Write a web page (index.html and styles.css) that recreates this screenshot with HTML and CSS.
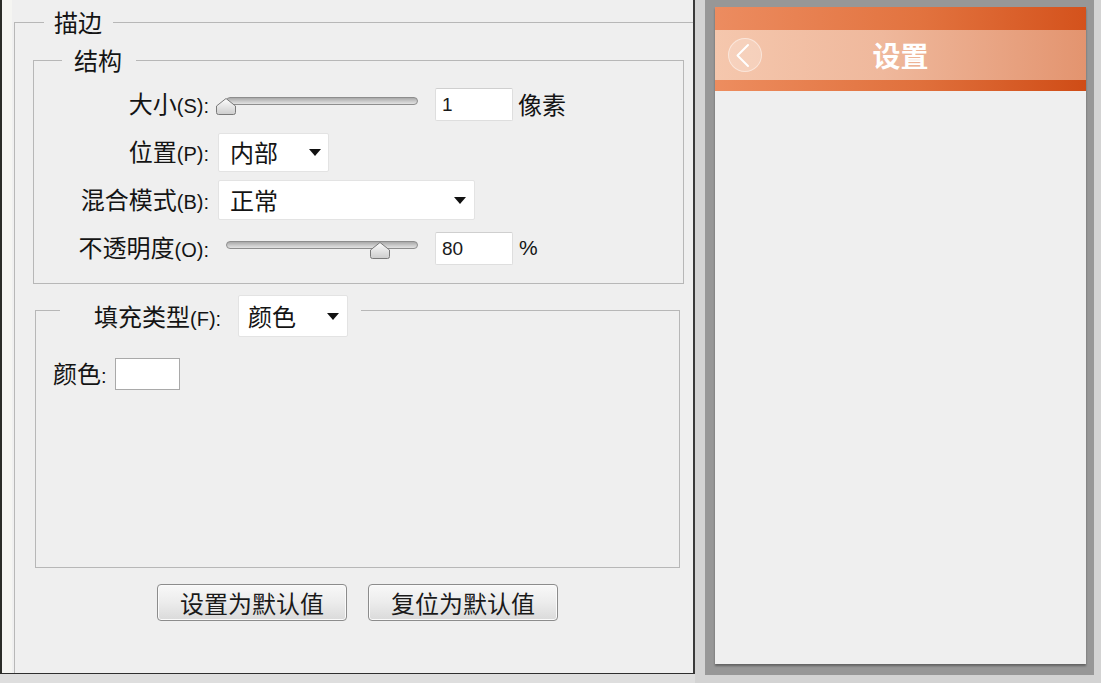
FILE: index.html
```html
<!DOCTYPE html>
<html lang="zh-CN">
<head>
<meta charset="utf-8">
<title>描边</title>
<link rel="stylesheet" href="styles.css">
</head>
<body>
<div class="page">
  <section class="dialog">
    <fieldset class="grp grp-stroke">
      <legend class="lg lg-stroke">描边</legend>

      <fieldset class="grp grp-struct">
        <legend class="lg lg-struct">结构</legend>
        <div class="form">
          <label class="lbl">大小<span class="k">(S):</span></label>
          <div class="ctl">
            <div class="slider" style="--v:0">
              <div class="track"></div>
              <svg class="thumb" viewBox="0 0 22 19" width="22" height="19"><defs><linearGradient id="tg1" x1="0" y1="0" x2="0" y2="1"><stop offset="0" stop-color="#fdfdfd"/><stop offset="1" stop-color="#cdcdcd"/></linearGradient></defs><path d="M11 1.5 L20.5 9 V15.5 Q20.5 17.5 18.5 17.5 H3.5 Q1.5 17.5 1.5 15.5 V9 Z" fill="url(#tg1)" stroke="#7a7a7a"/></svg>
            </div>
            <div class="num">1</div>
            <span class="unit">像素</span>
          </div>

          <label class="lbl">位置<span class="k">(P):</span></label>
          <div class="ctl">
            <div class="sel sel-pos"><span>内部</span><i class="caret"></i></div>
          </div>

          <label class="lbl">混合模式<span class="k">(B):</span></label>
          <div class="ctl">
            <div class="sel sel-blend"><span>正常</span><i class="caret"></i></div>
          </div>

          <label class="lbl">不透明度<span class="k">(O):</span></label>
          <div class="ctl">
            <div class="slider" style="--v:0.8">
              <div class="track"></div>
              <svg class="thumb" viewBox="0 0 22 19" width="22" height="19"><defs><linearGradient id="tg2" x1="0" y1="0" x2="0" y2="1"><stop offset="0" stop-color="#fdfdfd"/><stop offset="1" stop-color="#cdcdcd"/></linearGradient></defs><path d="M11 1.5 L20.5 9 V15.5 Q20.5 17.5 18.5 17.5 H3.5 Q1.5 17.5 1.5 15.5 V9 Z" fill="url(#tg2)" stroke="#7a7a7a"/></svg>
            </div>
            <div class="num">80</div>
            <span class="unit pct">%</span>
          </div>
        </div>
      </fieldset>

      <fieldset class="grp grp-fill">
        <legend class="lg lg-fill">
          <span class="lbl">填充类型<span class="k">(F):</span></span>
          <span class="sel sel-fill"><span>颜色</span><i class="caret"></i></span>
        </legend>
        <div class="color-row">
          <span class="lbl">颜色<span class="k">:</span></span>
          <div class="swatch"></div>
        </div>
      </fieldset>

      <div class="btns">
        <button class="btn" type="button">设置为默认值</button>
        <button class="btn" type="button">复位为默认值</button>
      </div>
    </fieldset>
  </section>

  <section class="preview">
    <div class="frame">
      <div class="screen">
        <header class="appbar">
          <div class="bar-top"></div>
          <div class="bar-mid">
            <span class="back">
              <svg viewBox="0 0 34 34" width="34" height="34"><polyline points="20,7 9.5,17.5 20,28" fill="none" stroke="#fff" stroke-width="2" stroke-linecap="round" stroke-linejoin="round"/></svg>
            </span>
            <h1 class="title">设置</h1>
          </div>
          <div class="bar-bot"></div>
        </header>
        <div class="content"></div>
      </div>
    </div>
  </section>
</div>
</body>
</html>
```

FILE: styles.css
```css
* { box-sizing: border-box; }

html, body {
  margin: 0;
  padding: 0;
}

body {
  width: 1101px;
  height: 683px;
  overflow: hidden;
  background: #dedede;
  font-family: "Noto Sans CJK SC", sans-serif;
  color: #141414;
}

.page {
  display: flex;
  height: 683px;
}

/* ---------- dialog ---------- */
.dialog {
  width: 695px;
  height: 674px;
  flex: none;
  background: #efefef;
  border-left: 2px solid #2c2d28;
  border-right: 2px solid #3a3a3a;
  border-bottom: 1px solid #2e2e2e;
  box-shadow: inset 10px 0 0 #f5f5f2;
  overflow: hidden;
}

.grp {
  margin: 0;
  padding: 0;
  min-width: 0;
  border: 1px solid #b7b7b7;
}

.lg {
  margin: 0;
  padding: 0;
  font-size: 24px;
  line-height: 28px;
  white-space: nowrap;
}

.k {
  font-family: "Liberation Sans", sans-serif;
  font-size: 20px;
}

.grp-stroke {
  margin: 8px 0 0 12px;
  border-right: 0;
  border-bottom: 0;
  height: 700px;
}

.lg-stroke {
  margin-left: 29px;
  padding: 0 11px 0 10px;
}

.grp-struct {
  margin: 10px 9px 0 18px;
  padding: 10px 0 15px 0;
}

.lg-struct {
  margin-left: 28px;
  padding: 0 14px 0 12px;
}

.form {
  display: grid;
  grid-template-columns: 175px auto;
  grid-auto-rows: 40px;
  column-gap: 9px;
  row-gap: 8px;
  align-items: center;
}

.lbl {
  font-size: 24px;
  line-height: 28px;
  white-space: nowrap;
}

.form .lbl {
  text-align: right;
}

.ctl {
  display: flex;
  align-items: center;
}

.slider {
  position: relative;
  width: 200px;
  height: 19px;
}

.track {
  margin: 2px 0 0 8px;
  width: 192px;
  height: 8px;
  border: 1px solid #8d8d8d;
  border-radius: 4px;
  background: linear-gradient(#a9a9a9, #cacaca 55%, #e2e2e2);
}

.thumb {
  position: absolute;
  top: 2px;
  left: calc(8px + var(--v) * 192px - 11px);
  display: block;
}

.num {
  margin-left: 17px;
  width: 78px;
  height: 33px;
  background: #fff;
  border: 1px solid #dedede;
  border-top-color: #cfcfcf;
  border-radius: 2px;
  padding-left: 6px;
  font-family: "Liberation Sans", sans-serif;
  font-size: 19px;
  line-height: 31px;
  color: #1a1a1a;
}

.unit {
  margin-left: 5px;
  font-size: 24px;
  line-height: 28px;
}

.unit.pct {
  font-family: "Liberation Sans", sans-serif;
  font-size: 21px;
  margin-left: 6px;
}

.sel {
  display: flex;
  align-items: center;
  justify-content: space-between;
  background: #fff;
  border: 1px solid #e3e3e3;
  border-radius: 2px;
  padding: 0 7px 0 11px;
  font-size: 24px;
  line-height: 28px;
}

.sel-pos { width: 111px; height: 39px; }
.sel-blend { width: 257px; height: 40px; padding-right: 8px; }

.caret {
  width: 0;
  height: 0;
  border-left: 6px solid transparent;
  border-right: 6px solid transparent;
  border-top: 7px solid #111;
}

.grp-fill {
  margin: 11px 13px 0 20px;
  height: 273px;
}

.lg-fill {
  display: flex;
  align-items: flex-start;
  height: 30px;
  margin-left: 24px;
  padding: 0 13px 0 34px;
}

.lg-fill .lbl {
  margin-top: 7px;
}

.sel-fill {
  flex: none;
  margin-left: 17px;
  width: 110px;
  height: 42px;
  padding: 0 8px 0 9px;
}

.color-row {
  display: flex;
  align-items: center;
  padding: 33px 0 0 17px;
  gap: 8px;
}

.swatch {
  width: 65px;
  height: 32px;
  background: #fff;
  border: 1px solid #a9a9a9;
}

.btns {
  display: flex;
  justify-content: center;
  gap: 21px;
  margin: 16px 13px 0 20px;
}

.btn {
  width: 190px;
  height: 37px;
  padding: 0;
  border: 1px solid #8c8c8c;
  border-radius: 4px;
  background: linear-gradient(#f8f8f8, #ececec 50%, #dadada);
  box-shadow: inset 0 0 0 1px #fbfbfb;
  font-family: "Noto Sans CJK SC", sans-serif;
  font-size: 24px;
  line-height: 28px;
  color: #1a1a1a;
}

/* ---------- preview ---------- */
.preview {
  flex: 1;
  height: 683px;
  background: #d3d3d3;
}

.frame {
  margin: 0 7px 0 10px;
  height: 675px;
  background: #979797;
  padding: 7px 8px 11px 10px;
}

.screen {
  height: 657px;
  background: #efefef;
  display: flex;
  flex-direction: column;
  box-shadow: 0 2px 2px rgba(0, 0, 0, 0.35);
}

.bar-top {
  height: 23px;
  background: linear-gradient(90deg, #ec8c60, #e2733f 55%, #d4521c);
}

.bar-mid {
  height: 50px;
  display: grid;
  grid-template-columns: 1fr auto 1fr;
  align-items: center;
  background: linear-gradient(90deg, #f5c7ad, #efb89c 45%, #e3946f);
}

.back {
  justify-self: start;
  margin-left: 13px;
  width: 34px;
  height: 34px;
  border-radius: 50%;
  background: rgba(255, 255, 255, 0.22);
  border: 1px solid rgba(255, 255, 255, 0.45);
  display: flex;
}

.back svg {
  display: block;
  margin: -1px;
}

.title {
  margin: 0;
  font-size: 28px;
  line-height: 32px;
  font-weight: 700;
  color: #fff;
}

.bar-bot {
  height: 11px;
  background: linear-gradient(90deg, #ed8d5f, #e0703c 55%, #cf4c16);
}

.content {
  flex: 1;
  background: #efefef;
}
```
